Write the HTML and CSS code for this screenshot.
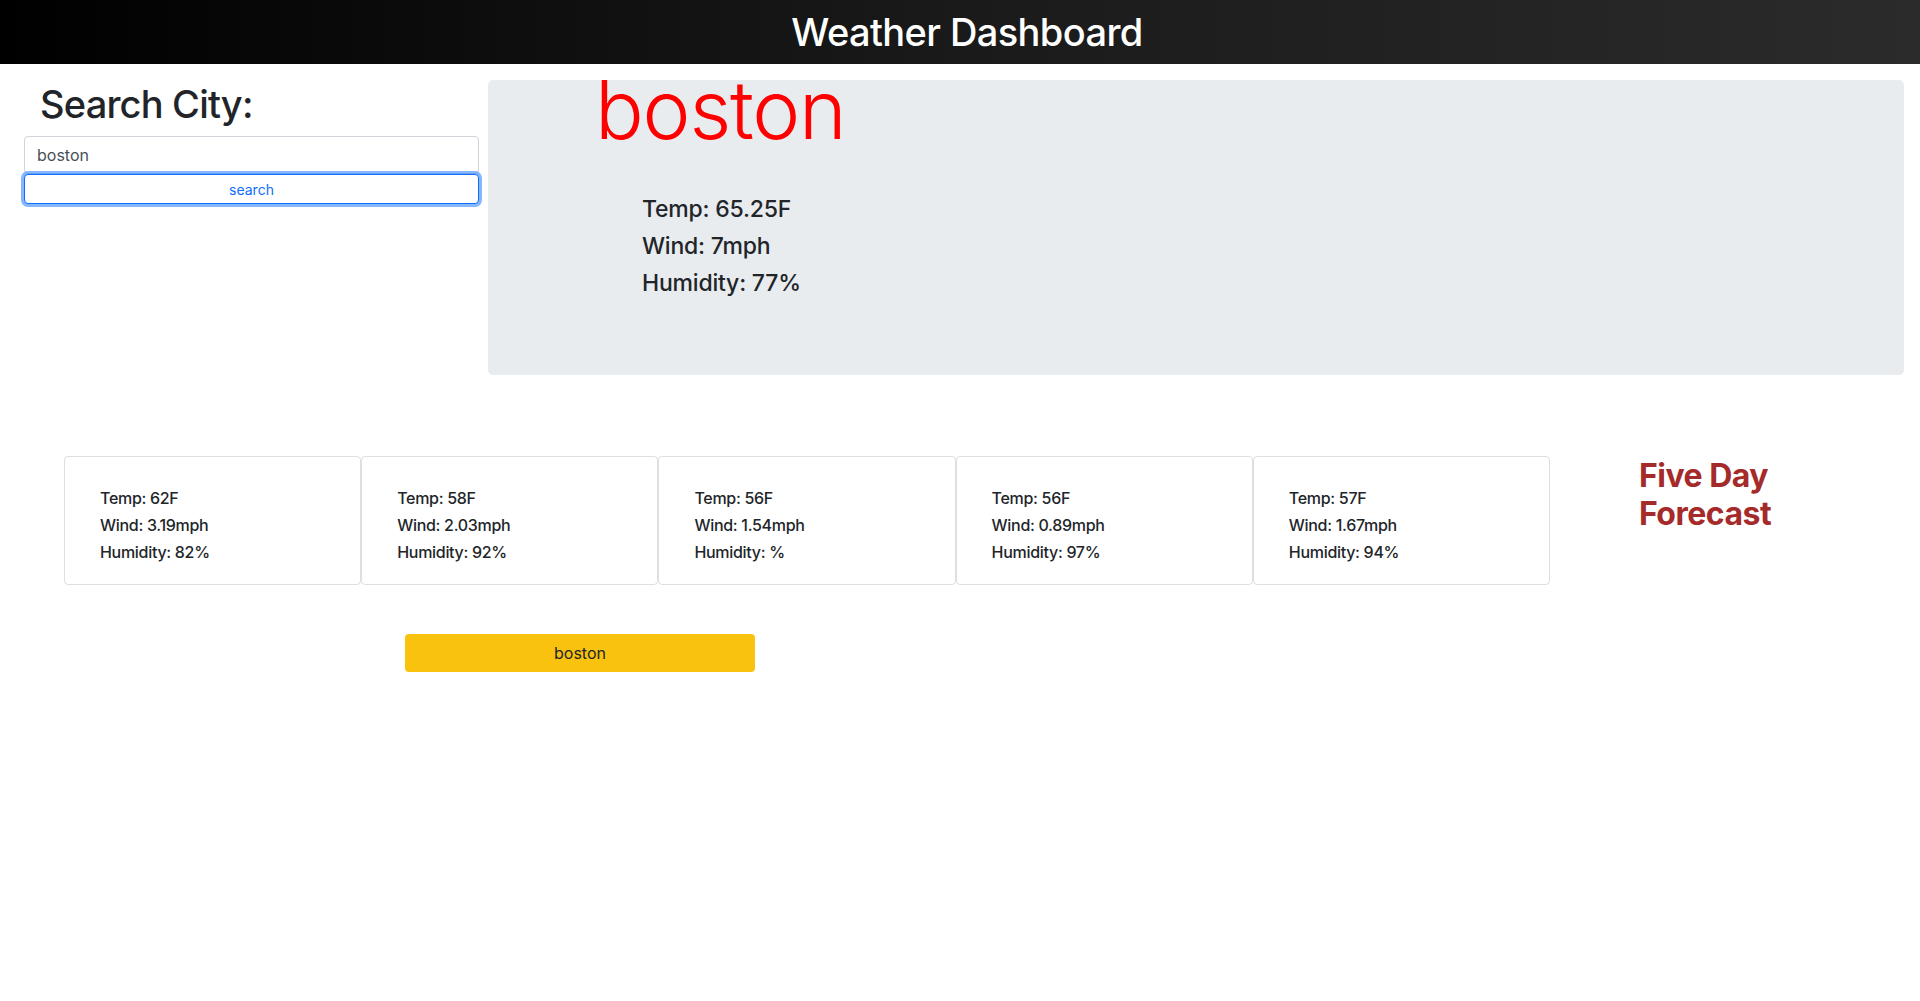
FILE: index.html
```html
<!DOCTYPE html>
<html lang="en">
<head>
<meta charset="utf-8">
<title>Weather Dashboard</title>
<link rel="stylesheet" href="styles.css">
</head>
<body>
<header class="topbar">
  <h1 class="topbar-title">Weather Dashboard</h1>
</header>
<main class="page">
  <section class="top-row">
    <aside class="search">
      <h1 class="search-title">Search City:</h1>
      <input class="search-input" type="text" value="boston">
      <button class="search-btn" type="button">search</button>
    </aside>
    <section class="current">
      <h1 class="city">boston</h1>
      <div class="current-stats">
        <h4 class="stat">Temp: 65.25F</h4>
        <h4 class="stat">Wind: 7mph</h4>
        <h4 class="stat">Humidity: 77%</h4>
      </div>
    </section>
  </section>
  <section class="forecast-row">
    <div class="cards">
      <div class="card">
        <h6 class="card-line">Temp: 62F</h6>
        <h6 class="card-line">Wind: 3.19mph</h6>
        <h6 class="card-line">Humidity: 82%</h6>
      </div>
      <div class="card">
        <h6 class="card-line">Temp: 58F</h6>
        <h6 class="card-line">Wind: 2.03mph</h6>
        <h6 class="card-line">Humidity: 92%</h6>
      </div>
      <div class="card">
        <h6 class="card-line">Temp: 56F</h6>
        <h6 class="card-line">Wind: 1.54mph</h6>
        <h6 class="card-line">Humidity: %</h6>
      </div>
      <div class="card">
        <h6 class="card-line">Temp: 56F</h6>
        <h6 class="card-line">Wind: 0.89mph</h6>
        <h6 class="card-line">Humidity: 97%</h6>
      </div>
      <div class="card">
        <h6 class="card-line">Temp: 57F</h6>
        <h6 class="card-line">Wind: 1.67mph</h6>
        <h6 class="card-line">Humidity: 94%</h6>
      </div>
    </div>
    <h2 class="forecast-title">Five Day Forecast</h2>
  </section>
  <div class="history">
    <button class="history-btn" type="button">boston</button>
  </div>
</main>
</body>
</html>
```
FILE: styles.css
```css
* { box-sizing: border-box; }
html, body { margin: 0; padding: 0; }
body {
  font-family: Inter, "Liberation Sans", Arial, sans-serif;
  font-size: 16px;
  line-height: 1.5;
  color: #212529;
  background: #fff;
}
h1, h2, h4, h6 { margin: 0; }

.topbar {
  height: 64px;
  background: linear-gradient(to right, #000 0%, #1a1a1a 50%, #2b2b2b 100%);
  display: flex;
  align-items: center;
  justify-content: center;
}
.topbar-title {
  color: #fff;
  font-size: 38px;
  font-weight: 500;
  line-height: 1.2;
  letter-spacing: -0.6px;
  padding-left: 14px;
  padding-top: 2px;
}

.page { padding-top: 16px; }

.top-row { display: flex; align-items: flex-start; }

.search {
  margin-left: 24px;
  width: 455px;
  display: flex;
  flex-direction: column;
}
.search-title {
  font-size: 38px;
  font-weight: 500;
  line-height: 48px;
  padding-left: 16px;
  margin-bottom: 8px;
  letter-spacing: -0.8px;
}
.search-input {
  height: 38px;
  width: 100%;
  border: 1px solid #ced4da;
  border-radius: 4px;
  padding: 6px 12px;
  font-family: inherit;
  font-size: 16px;
  color: #495057;
  background: #fff;
}
.search-btn {
  height: 30px;
  width: 100%;
  border: 1px solid #0d6efd;
  border-radius: 4px;
  background: #fff;
  color: #0d6efd;
  font-family: inherit;
  font-size: 14px;
  box-shadow: 0 0 0 3px rgba(13, 110, 253, 0.5);
}

.current {
  margin-left: 9px;
  width: 1416px;
  height: 295px;
  background: #e9ecef;
  border-radius: 5px;
  display: flex;
  flex-direction: column;
}
.city {
  margin-top: -18px;
  padding-left: 107px;
  font-size: 81px;
  font-weight: 300;
  line-height: 96px;
  color: #ff0000;
  letter-spacing: -1.2px;
}
.current-stats {
  margin-top: 37px;
  padding-left: 154px;
}
.stat {
  font-size: 23px;
  font-weight: 500;
  line-height: 28.8px;
  margin-bottom: 8px;
  letter-spacing: -0.2px;
}

.forecast-row {
  display: flex;
  align-items: flex-start;
  margin-top: 81px;
  padding-left: 64px;
}
.cards {
  display: flex;
  width: 1486px;
}
.card {
  flex: 1 1 0;
  height: 129px;
  border: 1px solid rgba(0, 0, 0, 0.125);
  border-radius: 4px;
  padding: 32px 16px 13px 35px;
}
.card-line {
  font-size: 16px;
  font-weight: 500;
  line-height: 19.2px;
  margin-bottom: 8px;
  letter-spacing: -0.3px;
}
.forecast-title {
  margin-left: 89px;
  margin-top: 1px;
  width: 190px;
  font-size: 32px;
  font-weight: 700;
  line-height: 38.4px;
  color: #a52a2a;
  letter-spacing: -0.5px;
}

.history {
  margin-top: 49px;
  padding-left: 405px;
}
.history-btn {
  width: 350px;
  height: 38px;
  border: none;
  border-radius: 4px;
  background: #f9c20e;
  color: #212529;
  font-family: inherit;
  font-size: 16px;
}
```
